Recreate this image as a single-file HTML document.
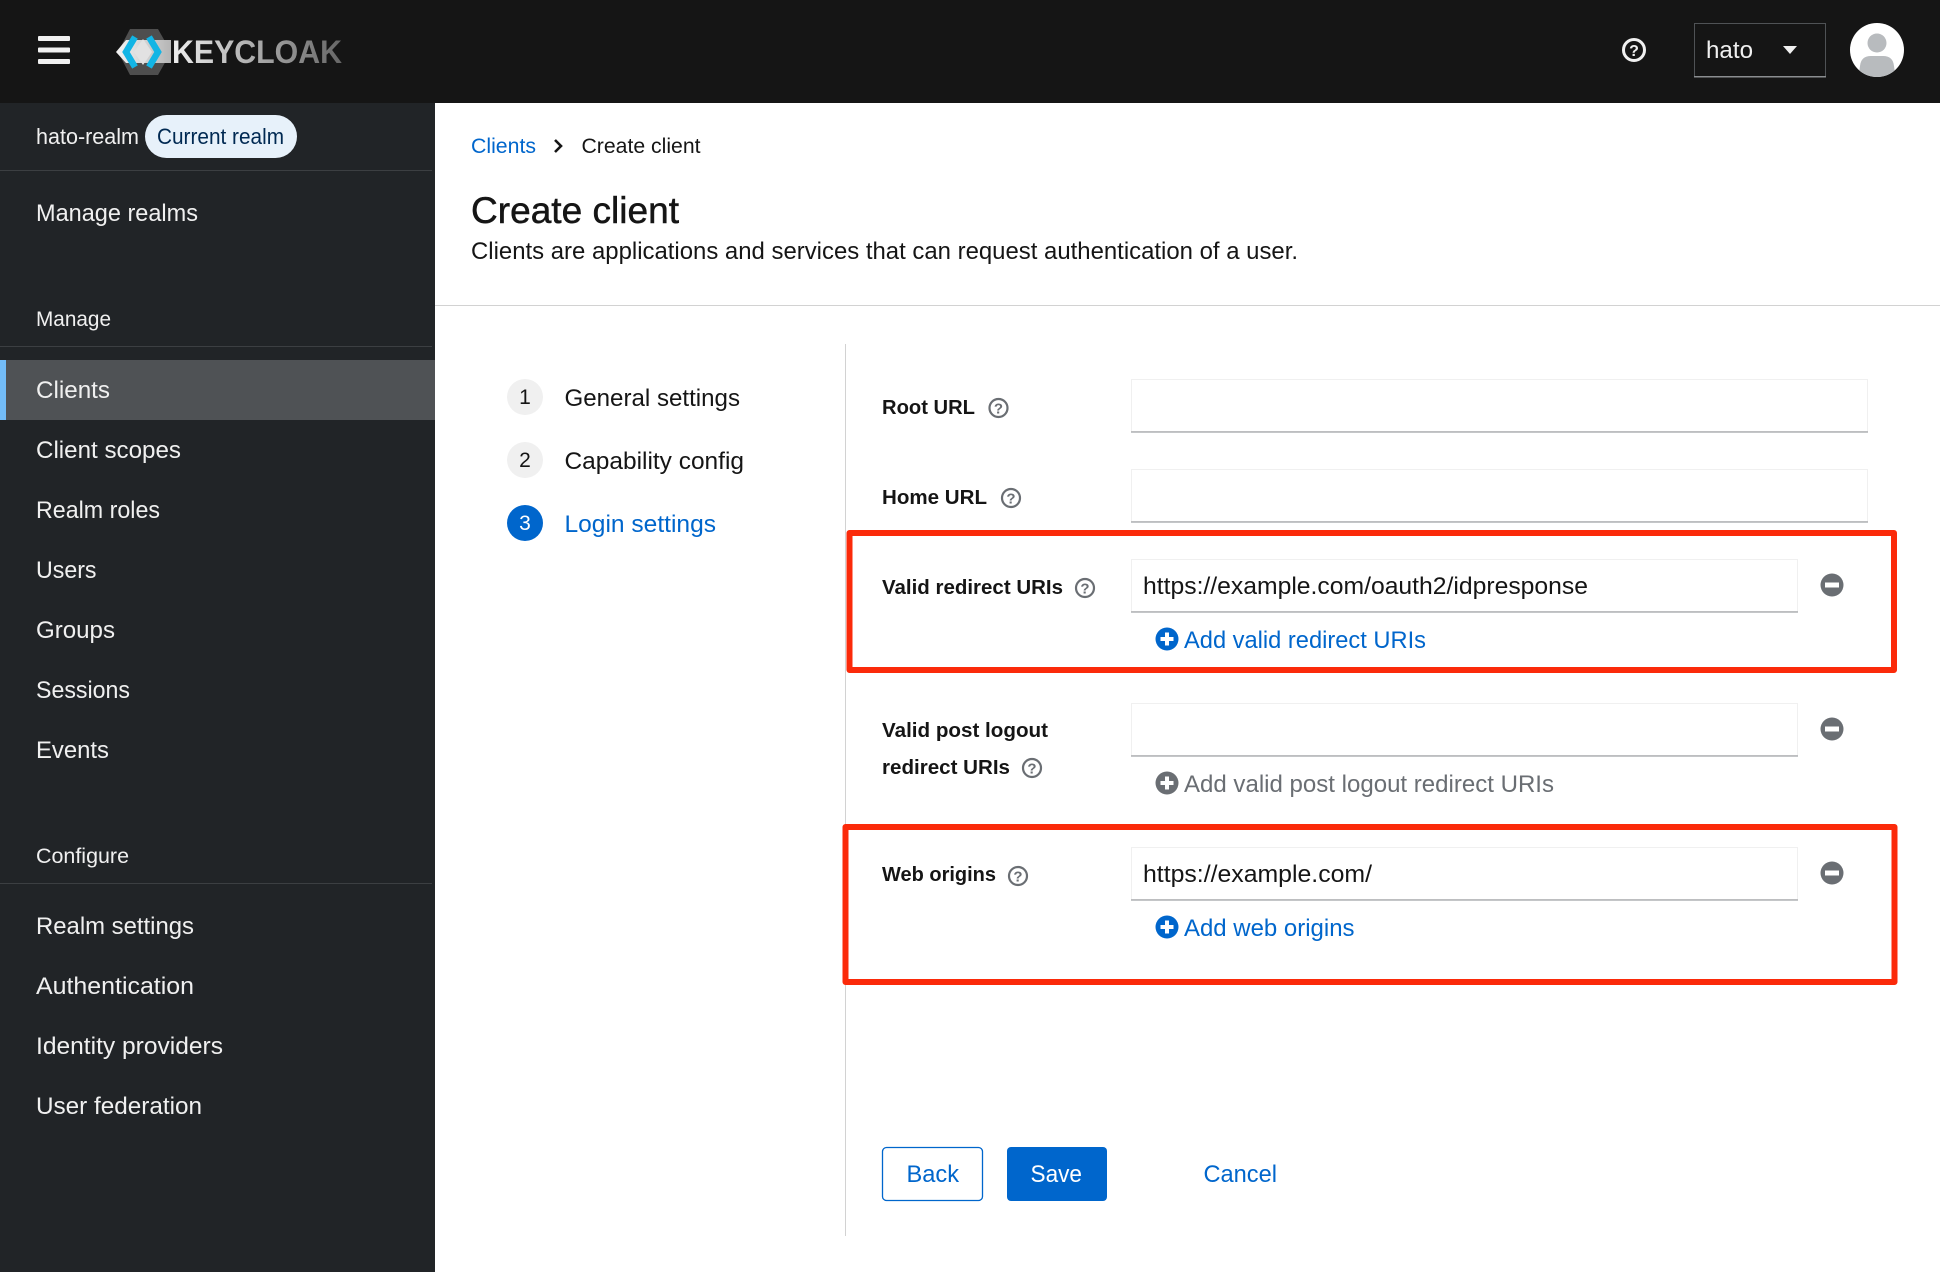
<!DOCTYPE html>
<html lang="en">
<head>
<meta charset="utf-8">
<title>Create client - Keycloak</title>
<style>
html,body{margin:0;padding:0;width:1940px;height:1272px;overflow:hidden;background:#fff;}
header,nav,main{position:absolute;display:block;}
header{left:0;top:0;width:1940px;height:103px;background:#151515;}
nav{left:0;top:103px;width:435px;height:1169px;background:#212427;}
main{left:435px;top:103px;width:1505px;height:1169px;background:#fff;}
svg{display:block;position:absolute;left:0;top:0;}
text{font-family:"Liberation Sans",sans-serif;font-size:24px;}
.n{fill:#f0f0f0;}
.s{font-size:21px;fill:#f0f0f0;}
.d{fill:#151515;}
.l{fill:#0066cc;}
.b{font-weight:700;font-size:20.5px;fill:#151515;}
.q{font-size:15px;font-weight:700;fill:#6a6e73;text-anchor:middle;}
.st{font-size:21px;text-anchor:middle;}
</style>
</head>
<body>
<header>
<svg width="1940" height="103" viewBox="0 0 1940 103">
<defs>
<linearGradient id="kc" x1="172" x2="342" y1="0" y2="0" gradientUnits="userSpaceOnUse"><stop offset="0" stop-color="#efefef"/><stop offset=".5" stop-color="#aaaaaa"/><stop offset="1" stop-color="#666666"/></linearGradient>
<linearGradient id="band" x1="116" x2="171" y1="0" y2="0" gradientUnits="userSpaceOnUse"><stop offset="0" stop-color="#f4f4f4"/><stop offset="1" stop-color="#b5b5b5"/></linearGradient>
<clipPath id="av"><circle cx="1877" cy="50" r="27"/></clipPath>
</defs>
<rect x="38" y="36" width="32" height="5" rx="1" fill="#f0f0f0"/>
<rect x="38" y="47.5" width="32" height="5" rx="1" fill="#f0f0f0"/>
<rect x="38" y="59" width="32" height="5" rx="1" fill="#f0f0f0"/>
<polygon points="118,52 130,29 158,29 171,52 158,75 130,75" fill="#4e4e4e"/>
<polygon points="116,52 126,40 171,40 171,63 126,63" fill="url(#band)"/>
<polygon points="143,39 152,52 143,65 134,52" fill="#e2e2e2"/>
<path d="M135 37 L126 52 L135 67" fill="none" stroke="#12b5e5" stroke-width="6.500"/>
<path d="M149 37 L158 52 L149 67" fill="none" stroke="#12b5e5" stroke-width="6.500"/>
<text x="172" y="63" textLength="170" lengthAdjust="spacingAndGlyphs" style="font-size:32px;font-weight:700;fill:url(#kc)">KEYCLOAK</text>
<circle cx="1634" cy="50" r="10.500" fill="none" stroke="#f0f0f0" stroke-width="3"/>
<text x="1634" y="56" text-anchor="middle" style="font-size:16px;font-weight:700;fill:#f0f0f0">?</text>
<rect x="1694.500" y="23.500" width="131" height="53" fill="none" stroke="#4f5255"/>
<rect x="1694" y="76" width="132" height="1.500" fill="#8a8d90"/>
<text x="1706" y="58" textLength="47" lengthAdjust="spacingAndGlyphs" class="n">hato</text>
<polygon points="1783,46 1797,46 1790,54" fill="#f0f0f0"/>
<circle cx="1877" cy="50" r="27" fill="#fff"/>
<g clip-path="url(#av)" fill="#b8bbbe">
<circle cx="1877" cy="43" r="9.500"/>
<path d="M1858 80 L1860 66 Q1861 56 1871 56 L1883 56 Q1893 56 1894 66 L1896 80 Z"/>
</g>
</svg>
</header>
<nav>
<svg width="435" height="1169" viewBox="0 103 435 1169">
<text x="36" y="144" textLength="103" lengthAdjust="spacingAndGlyphs" style="font-size:22px;fill:#f0f0f0">hato-realm</text>
<rect x="145" y="115" width="152" height="43" rx="21.500" fill="#e7f1fa"/>
<text x="157" y="144" textLength="127" lengthAdjust="spacingAndGlyphs" style="font-size:22px;fill:#002952">Current realm</text>
<rect x="0" y="170" width="432" height="1" fill="#3c3f42"/>
<text x="36" y="221" textLength="162" lengthAdjust="spacingAndGlyphs" class="n">Manage realms</text>
<text x="36" y="326" textLength="75" lengthAdjust="spacingAndGlyphs" class="s">Manage</text>
<rect x="0" y="346" width="432" height="1" fill="#3c3f42"/>
<rect x="0" y="360" width="435" height="60" fill="#4f5255"/>
<rect x="0" y="360" width="6" height="60" fill="#73bcf7"/>
<text x="36" y="398" textLength="74" lengthAdjust="spacingAndGlyphs" class="n">Clients</text>
<text x="36" y="458" textLength="145" lengthAdjust="spacingAndGlyphs" class="n">Client scopes</text>
<text x="36" y="518" textLength="124" lengthAdjust="spacingAndGlyphs" class="n">Realm roles</text>
<text x="36" y="578" textLength="60.500" lengthAdjust="spacingAndGlyphs" class="n">Users</text>
<text x="36" y="638" textLength="79" lengthAdjust="spacingAndGlyphs" class="n">Groups</text>
<text x="36" y="698" textLength="94" lengthAdjust="spacingAndGlyphs" class="n">Sessions</text>
<text x="36" y="758" textLength="73" lengthAdjust="spacingAndGlyphs" class="n">Events</text>
<text x="36" y="863" textLength="93" lengthAdjust="spacingAndGlyphs" class="s">Configure</text>
<rect x="0" y="883" width="432" height="1" fill="#3c3f42"/>
<text x="36" y="934" textLength="158" lengthAdjust="spacingAndGlyphs" class="n">Realm settings</text>
<text x="36" y="994" textLength="158" lengthAdjust="spacingAndGlyphs" class="n">Authentication</text>
<text x="36" y="1054" textLength="187" lengthAdjust="spacingAndGlyphs" class="n">Identity providers</text>
<text x="36" y="1114" textLength="166" lengthAdjust="spacingAndGlyphs" class="n">User federation</text>
</svg>
</nav>
<main>
<svg width="1505" height="1169" viewBox="435 103 1505 1169">
<text x="471" y="153" textLength="65" lengthAdjust="spacingAndGlyphs" class="l" style="font-size:21.500px">Clients</text>
<path d="M555 140 L561 146 L555 152" fill="none" stroke="#151515" stroke-width="2.600"/>
<text x="581.500" y="153" textLength="119" lengthAdjust="spacingAndGlyphs" class="d" style="font-size:21.500px">Create client</text>
<text x="471" y="223" textLength="208" lengthAdjust="spacingAndGlyphs" class="d" style="font-size:37px;stroke:#151515;stroke-width:.5px">Create client</text>
<text x="471" y="259" textLength="827" lengthAdjust="spacingAndGlyphs" class="d">Clients are applications and services that can request authentication of a user.</text>
<rect x="435" y="305" width="1505" height="1" fill="#d2d2d2"/>
<rect x="845" y="344" width="1" height="892" fill="#d2d2d2"/>

<circle cx="525" cy="397" r="18" fill="#f0f0f0"/>
<text x="525" y="404" class="st d">1</text>
<text x="564.500" y="406" textLength="175.500" lengthAdjust="spacingAndGlyphs" class="d">General settings</text>
<circle cx="525" cy="460" r="18" fill="#f0f0f0"/>
<text x="525" y="467" class="st d">2</text>
<text x="564.500" y="469" textLength="179.500" lengthAdjust="spacingAndGlyphs" class="d">Capability config</text>
<circle cx="525" cy="523" r="18" fill="#0066cc"/>
<text x="525" y="530" class="st" fill="#fff">3</text>
<text x="564.500" y="532" textLength="151.500" lengthAdjust="spacingAndGlyphs" class="l">Login settings</text>

<text x="882" y="414" textLength="93" lengthAdjust="spacingAndGlyphs" class="b">Root URL</text>
<circle cx="998.500" cy="408" r="9" fill="none" stroke="#6a6e73" stroke-width="2.200"/><text x="998.500" y="413.500" class="q">?</text>
<rect x="1131.500" y="379.500" width="736" height="52" fill="none" stroke="#f0f0f0"/>
<rect x="1131" y="431.500" width="737" height="1" fill="#8a8d90"/>

<text x="882" y="504" textLength="105" lengthAdjust="spacingAndGlyphs" class="b">Home URL</text>
<circle cx="1011" cy="498" r="9" fill="none" stroke="#6a6e73" stroke-width="2.200"/><text x="1011" y="503.500" class="q">?</text>
<rect x="1131.500" y="469.500" width="736" height="52" fill="none" stroke="#f0f0f0"/>
<rect x="1131" y="521.500" width="737" height="1" fill="#8a8d90"/>

<text x="882" y="594" textLength="181" lengthAdjust="spacingAndGlyphs" class="b">Valid redirect URIs</text>
<circle cx="1085" cy="588" r="9" fill="none" stroke="#6a6e73" stroke-width="2.200"/><text x="1085" y="593.500" class="q">?</text>
<rect x="1131.500" y="559.500" width="666" height="52" fill="none" stroke="#f0f0f0"/>
<rect x="1131" y="611.500" width="667" height="1" fill="#8a8d90"/>
<text x="1143" y="594" textLength="445" lengthAdjust="spacingAndGlyphs" class="d">https://example.com/oauth2/idpresponse</text>
<circle cx="1832" cy="585" r="11.500" fill="#6a6e73"/><rect x="1825" y="582.500" width="14" height="5" fill="#fff"/>
<circle cx="1167" cy="639" r="11.500" fill="#0066cc"/><path d="M1167 632.500v13M1160.500 639h13" stroke="#fff" stroke-width="4"/>
<text x="1184" y="648" textLength="242" lengthAdjust="spacingAndGlyphs" class="l">Add valid redirect URIs</text>
<rect x="849.500" y="533" width="1044.500" height="137" fill="none" stroke="#fb2a0a" stroke-width="6" stroke-linejoin="round"/>

<text x="882" y="737" textLength="166" lengthAdjust="spacingAndGlyphs" class="b">Valid post logout</text>
<text x="882" y="774" textLength="128" lengthAdjust="spacingAndGlyphs" class="b">redirect URIs</text>
<circle cx="1032" cy="768" r="9" fill="none" stroke="#6a6e73" stroke-width="2.200"/><text x="1032" y="773.500" class="q">?</text>
<rect x="1131.500" y="703.500" width="666" height="52" fill="none" stroke="#f0f0f0"/>
<rect x="1131" y="755.500" width="667" height="1" fill="#8a8d90"/>
<circle cx="1832" cy="729" r="11.500" fill="#6a6e73"/><rect x="1825" y="726.500" width="14" height="5" fill="#fff"/>
<circle cx="1167" cy="783" r="11.500" fill="#6a6e73"/><path d="M1167 776.500v13M1160.500 783h13" stroke="#fff" stroke-width="4"/>
<text x="1184" y="792" textLength="370" lengthAdjust="spacingAndGlyphs" fill="#6a6e73">Add valid post logout redirect URIs</text>

<text x="882" y="881" textLength="114" lengthAdjust="spacingAndGlyphs" class="b">Web origins</text>
<circle cx="1018" cy="876" r="9" fill="none" stroke="#6a6e73" stroke-width="2.200"/><text x="1018" y="881.500" class="q">?</text>
<rect x="1131.500" y="847.500" width="666" height="52" fill="none" stroke="#f0f0f0"/>
<rect x="1131" y="899.500" width="667" height="1" fill="#8a8d90"/>
<text x="1143" y="882" textLength="229" lengthAdjust="spacingAndGlyphs" class="d">https://example.com/</text>
<circle cx="1832" cy="873" r="11.500" fill="#6a6e73"/><rect x="1825" y="870.500" width="14" height="5" fill="#fff"/>
<circle cx="1167" cy="927" r="11.500" fill="#0066cc"/><path d="M1167 920.500v13M1160.500 927h13" stroke="#fff" stroke-width="4"/>
<text x="1184" y="936" textLength="170.500" lengthAdjust="spacingAndGlyphs" class="l">Add web origins</text>
<rect x="845.500" y="827" width="1049" height="155" fill="none" stroke="#fb2a0a" stroke-width="6" stroke-linejoin="round"/>

<rect x="882.500" y="1147.500" width="100" height="53" rx="4" fill="#fff" stroke="#0066cc" stroke-width="1.300"/>
<text x="906.500" y="1182" textLength="52.500" lengthAdjust="spacingAndGlyphs" class="l">Back</text>
<rect x="1007" y="1147" width="100" height="54" rx="4" fill="#0066cc"/>
<text x="1030.500" y="1182" textLength="51.500" lengthAdjust="spacingAndGlyphs" fill="#fff">Save</text>
<text x="1203.500" y="1182" textLength="73.500" lengthAdjust="spacingAndGlyphs" class="l">Cancel</text>
</svg>
</main>
</body>
</html>
